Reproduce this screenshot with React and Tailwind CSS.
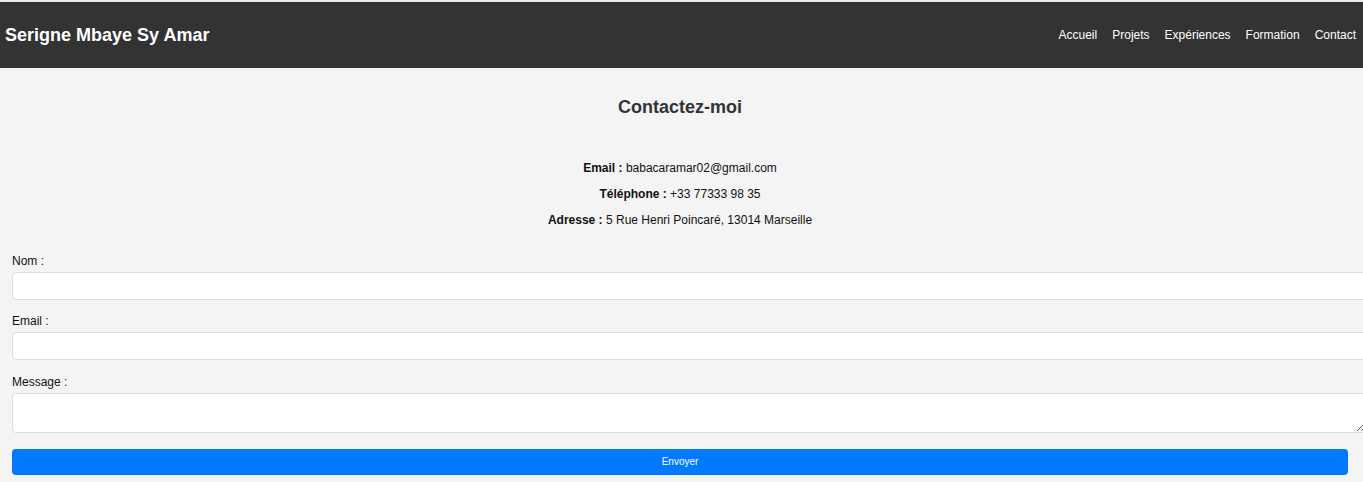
export default function App() {
  const font = { fontFamily: '"Liberation Sans", Arial, sans-serif' };
  return (
    <div className="min-h-[482px] bg-[#f4f4f4] overflow-hidden text-[#222]" style={font}>
      <div className="h-[2px] bg-[#ebebeb]" />
      <header className="h-[66px] bg-[#333333] flex items-center justify-between pl-[5px] pr-[7px]">
        <h1 className="text-[18px] font-bold text-white leading-[21px]">Serigne Mbaye Sy Amar</h1>
        <nav className="flex gap-[15px] text-[12px] text-white leading-[14px]">
          <a>Accueil</a>
          <a>Projets</a>
          <a>Expériences</a>
          <a>Formation</a>
          <a>Contact</a>
        </nav>
      </header>
      <main className="pl-[12px] pr-[15px]">
        <h2 className="mt-[29px] text-center text-[18px] font-bold leading-[21px] text-[#333]">Contactez-moi</h2>
        <div className="mt-[43px] flex flex-col gap-[12px] text-center text-[12px] leading-[14px] text-[#111]">
          <p><strong>Email :</strong> babacaramar02@gmail.com</p>
          <p><strong>Téléphone :</strong> +33 77333 98 35</p>
          <p><strong>Adresse :</strong> 5 Rue Henri Poincaré, 13014 Marseille</p>
        </div>
        <form className="mt-[27px] flex flex-col text-[12px] leading-[14px] text-[#111]">
          <label className="block mb-[4px]">Nom :</label>
          <input type="text" className="block w-[calc(100%+20px)] h-[28px] bg-white border border-[#dddddd] rounded-[4px] mb-[14px] outline-none" />
          <label className="block mb-[4px]">Email :</label>
          <input type="email" className="block w-[calc(100%+20px)] h-[28px] bg-white border border-[#dddddd] rounded-[4px] mb-[15px] outline-none" />
          <label className="block mb-[4px]">Message :</label>
          <textarea className="block w-[calc(100%+18px)] h-[40px] bg-white border border-[#dddddd] rounded-[4px] mb-[16px] outline-none resize-y" />
          <button type="button" className="w-full h-[26px] bg-[#007bff] text-white text-[10px] rounded-[4px]">Envoyer</button>
        </form>
      </main>
    </div>
  );
}
